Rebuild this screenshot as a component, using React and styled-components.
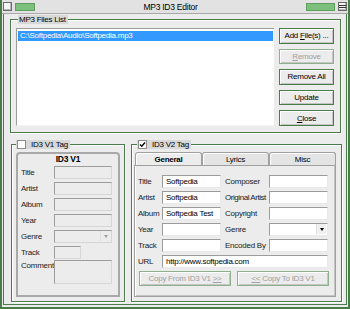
import React from 'react';
import styled, { createGlobalStyle } from 'styled-components';

const Global = createGlobalStyle`
  html, body { margin: 0; padding: 0; background: #ececec; }
  body { font-family: "Liberation Sans", Arial, sans-serif; font-size: 8px; letter-spacing: -0.25px; color: #000; }
  * { box-sizing: border-box; }
`;

const Window = styled.div`
  width: 350px;
  height: 309px;
  display: flex;
  flex-direction: column;
  background: #ececec;
  border-left: 2px solid #4a7c4a;
  border-right: 2px solid #4a7c4a;
  border-bottom: 2px solid #4a7c4a;
  overflow: hidden;
`;

const TitleBar = styled.div`
  height: 14px;
  display: flex;
  align-items: center;
  padding: 0 1px;
  gap: 3px;
  background: #e2e2e2;
  border-bottom: 1px solid #a9a9a9;
`;

const SysBox = styled.div`
  width: 9px;
  height: 9px;
  border: 1px solid #6a6a6a;
  background: #f4f4f4;
  box-shadow: inset -1px -1px 0 #b8b8b8;
  display: flex;
  align-items: center;
  justify-content: center;
`;

const GreenBar = styled.div`
  width: ${p => p.$w}px;
  height: 8px;
  background: #7dbf7d;
  border: 1px solid #5e9e5e;
`;

const Title = styled.div`
  flex: 1;
  text-align: center;
  font-size: 8.5px;
`;

const Body = styled.div`
  flex: 1;
  display: flex;
  flex-direction: column;
  border-left: 1px solid #4a7c4a;
  border-right: 1px solid #4a7c4a;
  border-bottom: 1px solid #4a7c4a;
  margin: 0 1px 2px;
  padding: 2px 5px 2px 6px;
`;

const Group = styled.div`
  position: relative;
  border: 1px solid #4a7c4a;
  box-shadow: inset 1px 1px 0 #fff, 1px 1px 0 #fff;
  padding: ${p => p.$pad};
  height: ${p => p.$h}px;
  margin-top: ${p => p.$mt || 0}px;
`;

const Legend = styled.div`
  position: absolute;
  top: -5px;
  left: ${p => p.$left}px;
  height: 9px;
  display: flex;
  align-items: center;
  gap: 5px;
  padding: 0 2px 0 1px;
  background: #d8d8d8;
  line-height: 9px;
  white-space: nowrap;
`;

const Check = styled.div`
  width: 9px;
  height: 9px;
  border: 1px solid #8a8a8a;
  background: #fff;
  display: flex;
  align-items: center;
  justify-content: center;
`;

const FilesRow = styled.div`
  display: flex;
  gap: 5px;
  height: 100%;
`;

const ListBox = styled.div`
  flex: 1;
  background: #fff;
  border-top: 1px solid #9c9c9c;
  border-left: 1px solid #9c9c9c;
  border-bottom: 1px solid #f4f4f4;
  padding: 2px 1px;
`;

const ListItem = styled.div`
  height: 10px;
  line-height: 10px;
  padding-left: 2px;
  background: ${p => (p.$selected ? '#3399ff' : 'transparent')};
  color: ${p => (p.$selected ? '#fff' : '#000')};
`;

const ButtonCol = styled.div`
  width: 55px;
  display: flex;
  flex-direction: column;
  gap: 5px;
  margin-right: 6px;
`;

const Btn = styled.div`
  height: ${p => p.$h || 16}px;
  width: ${p => (p.$w ? `${p.$w}px` : 'auto')};
  border: 1px solid ${p => (p.$disabled ? '#8fb08f' : '#4a7c4a')};
  box-shadow: inset 1px 1px 0 #fff, inset -1px -1px 0 #c4c4c4;
  background: #ececec;
  display: flex;
  align-items: center;
  justify-content: center;
  white-space: pre;
  color: ${p => (p.$disabled ? '#a0a0a0' : '#000')};
`;

const U = styled.span`
  text-decoration: underline;
`;

const Separator = styled.div`
  height: 11px;
`;

const BottomRow = styled.div`
  display: grid;
  grid-template-columns: 114px 211px;
  gap: 6px;
  padding-left: 1px;
`;

const V1Panel = styled.div`
  height: 145px;
  border: 2px solid #a9a9a9;
  border-radius: 4px 4px 0 0;
  background: #ececec;
  padding: 0 0 0 3px;
  display: flex;
  flex-direction: column;
`;

const PanelTitle = styled.div`
  font-weight: bold;
  font-size: 8.5px;
  text-align: center;
  height: 10px;
  line-height: 10px;
  padding-right: 3px;
`;

const V1Row = styled.div`
  display: flex;
  align-items: ${p => (p.$top ? 'flex-start' : 'center')};
  height: ${p => p.$h || 16}px;
`;

const Label = styled.div`
  width: ${p => p.$w}px;
  color: #222;
  white-space: nowrap;
`;

const Field = styled.div`
  width: ${p => p.$w}px;
  height: ${p => p.$h || 13}px;
  background: ${p => (p.$off ? '#ececec' : '#fff')};
  border-top: 1px solid #9c9c9c;
  border-left: 1px solid #9c9c9c;
  border-right: 1px solid ${p => (p.$off ? '#d6d6d6' : '#e8e8e8')};
  border-bottom: 1px solid ${p => (p.$off ? '#d6d6d6' : '#e8e8e8')};
  padding-left: 3px;
  line-height: 11px;
  white-space: nowrap;
  overflow: hidden;
  display: flex;
  align-items: center;
  justify-content: space-between;
`;

const Arrow = styled.div`
  width: 10px;
  height: 10px;
  margin-right: 1px;
  margin-left: auto;
  border-left: 1px solid #e0e0e0;
  background: ${p => (p.$off ? '#ececec' : '#f0f0f0')};
  display: flex;
  align-items: center;
  justify-content: center;
  &::after {
    content: '';
    border-left: 2.5px solid transparent;
    border-right: 2.5px solid transparent;
    border-top: 3px solid ${p => (p.$off ? '#a0a0a0' : '#000')};
  }
`;

const Tabs = styled.div`
  display: flex;
  height: 13px;
  padding-left: 1px;
`;

const Tab = styled.div`
  width: 67px;
  height: 13px;
  display: flex;
  align-items: center;
  justify-content: center;
  border: 1px solid #a0a0a0;
  border-bottom: none;
  border-radius: 3px 3px 0 0;
  background: ${p => (p.$active ? '#ececec' : '#e4e4e4')};
  font-weight: ${p => (p.$active ? 'bold' : 'normal')};
  box-shadow: inset 1px 1px 0 #fff;
`;

const TabPanel = styled.div`
  height: 132px;
  border: 1px solid #a0a0a0;
  box-shadow: inset 1px 0 0 #fff, inset -1px -1px 0 #c4c4c4;
  padding: 7px 0 0 3px;
  display: flex;
  flex-direction: column;
`;

const V2Grid = styled.div`
  display: grid;
  grid-template-columns: 24px 63px 44px 59px;
  grid-auto-rows: 16px;
  align-items: center;
`;

const UrlRow = styled.div`
  display: flex;
  align-items: center;
  height: 16px;
`;

const CopyRow = styled.div`
  display: flex;
  gap: 6px;
  margin-top: 2px;
  padding-left: 1px;
`;

const v1Fields = [
  { label: 'Title' },
  { label: 'Artist' },
  { label: 'Album' },
  { label: 'Year' },
  { label: 'Genre', combo: true },
  { label: 'Track', w: 27 },
];

const v2Fields = [
  ['Title', 'Softpedia', 'Composer', ''],
  ['Artist', 'Softpedia', 'Original Artist', ''],
  ['Album', 'Softpedia Test', 'Copyright', ''],
  ['Year', '', 'Genre', null],
  ['Track', '', 'Encoded By', ''],
];

function CheckMark() {
  return (
    <svg width="7" height="7" viewBox="0 0 7 7">
      <path d="M1 3.5 L2.8 5.3 L6 1.5" stroke="#000" strokeWidth="1.4" fill="none" />
    </svg>
  );
}

export default function App() {
  return (
    <>
      <Global />
      <Window>
        <TitleBar>
          <SysBox />
          <GreenBar $w={20} />
          <Title>MP3 ID3 Editor</Title>
          <GreenBar $w={29} />
          <SysBox>
            <svg width="7" height="7" viewBox="0 0 7 7">
              <path d="M0 2.5 H7 M0 4.5 H7" stroke="#333" strokeWidth="1" />
            </svg>
          </SysBox>
        </TitleBar>
        <Body>
          <Group $h={114} $mt={3} $pad="8px 0 6px 5px">
            <Legend $left={7}>MP3 Files List</Legend>
            <FilesRow>
              <ListBox>
                <ListItem $selected>C:\Softpedia\Audio\Softpedia.mp3</ListItem>
              </ListBox>
              <ButtonCol>
                <Btn><span>Add <U>F</U>ile(s) ...</span></Btn>
                <Btn $disabled><span><U>R</U>emove</span></Btn>
                <Btn>Remove All</Btn>
                <Btn>Update</Btn>
                <Btn><span><U>C</U>lose</span></Btn>
              </ButtonCol>
            </FilesRow>
          </Group>
          <Separator />
          <BottomRow>
            <Group $h={158} $pad="7px 4px 4px 4px">
              <Legend $left={4}>
                <Check />
                <span>ID3 V1 Tag</span>
              </Legend>
              <V1Panel>
                <PanelTitle>ID3 V1</PanelTitle>
                {v1Fields.map(f => (
                  <V1Row key={f.label}>
                    <Label $w={33}>{f.label}</Label>
                    <Field $w={f.w || 58} $off>
                      {f.combo && <Arrow $off />}
                    </Field>
                  </V1Row>
                ))}
                <V1Row $top $h={26}>
                  <Label $w={33} style={{ marginTop: 1 }}>Comment</Label>
                  <Field $w={58} $h={24} $off />
                </V1Row>
              </V1Panel>
            </Group>
            <Group $h={158} $pad="7px 5px 4px 2px">
              <Legend $left={5}>
                <Check>
                  <CheckMark />
                </Check>
                <span>ID3 V2 Tag</span>
              </Legend>
              <Tabs>
                <Tab $active>General</Tab>
                <Tab>Lyrics</Tab>
                <Tab>Misc</Tab>
              </Tabs>
              <TabPanel>
                <V2Grid>
                  {v2Fields.map(([l1, v1, l2, v2]) => (
                    <React.Fragment key={l1}>
                      <Label $w={24}>{l1}</Label>
                      <Field $w={59}>{v1}</Field>
                      <Label $w={44} style={{ letterSpacing: l2.length > 12 ? '-0.45px' : undefined }}>{l2}</Label>
                      <Field $w={59}>{v2 === null && <Arrow />}</Field>
                    </React.Fragment>
                  ))}
                </V2Grid>
                <UrlRow>
                  <Label $w={24}>URL</Label>
                  <Field $w={166}>http://www.softpedia.com</Field>
                </UrlRow>
                <CopyRow>
                  <Btn $w={92} $h={15} $disabled><span>Copy From ID3 V1 <U>&gt;&gt;</U></span></Btn>
                  <Btn $w={92} $h={15} $disabled><span><U>&lt;&lt;</U> Copy To ID3 V1</span></Btn>
                </CopyRow>
              </TabPanel>
            </Group>
          </BottomRow>
        </Body>
      </Window>
    </>
  );
}
